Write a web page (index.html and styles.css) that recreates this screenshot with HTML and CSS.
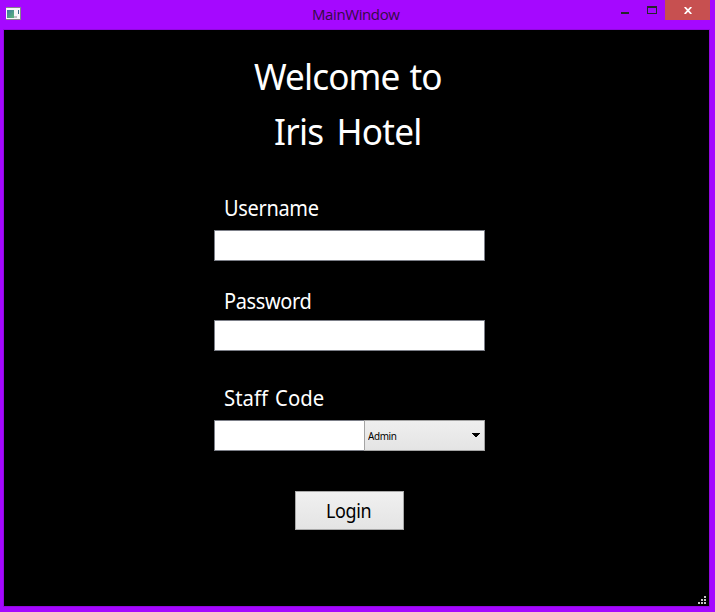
FILE: index.html
```html
<!DOCTYPE html>
<html lang="en">
<head>
<meta charset="utf-8">
<title>MainWindow</title>
<link rel="stylesheet" href="styles.css">
</head>
<body>
<div class="window">
  <header class="titlebar">
    <svg class="app-icon" width="15" height="13" viewBox="0 0 15 13" shape-rendering="crispEdges">
      <defs><linearGradient id="pane" x1="0" y1="0" x2="1" y2="1"><stop offset="0" stop-color="#3c78a0"/><stop offset="1" stop-color="#5cb878"/></linearGradient></defs>
      <rect width="15" height="13" fill="#85858c"/>
      <rect x="0" y="1" width="14" height="11" fill="#f7f7f9"/>
      <rect x="1" y="3" width="7" height="8" fill="url(#pane)"/>
      <rect x="8" y="9" width="3" height="2" fill="#c0c0c8"/>
      <rect x="12" y="3" width="1" height="4" fill="#38708e"/>
    </svg>
    <h1 class="caption">MainWindow</h1>
    <div class="controls">
      <svg class="minmax" width="65" height="20" viewBox="0 0 65 20" shape-rendering="crispEdges">
        <rect x="21" y="12" width="8" height="2" fill="#26262c"/>
        <path d="M47 6h10v8H47zM48 8v5h8V8z" fill="#26262c" fill-rule="evenodd"/>
      </svg>
      <button class="close" aria-label="Close">
        <svg width="8" height="7" viewBox="0 0 8 7"><path d="M.7 0 7.3 7M7.3 0 .7 7" stroke="#fff" stroke-width="1.8"/></svg>
      </button>
    </div>
  </header>
  <main class="client">
    <h2 class="welcome"><span class="line first">Welcome to</span><span class="line second">Iris Hotel</span></h2>
    <form class="login">
      <label class="label user" for="u">Username</label>
      <input class="field" id="u">
      <label class="label pass" for="p">Password</label>
      <input class="field" id="p" type="password">
      <label class="label staff" for="s">Staff Code</label>
      <div class="staff-row">
        <input class="field code" id="s">
        <div class="combo"><span class="role">Admin</span><svg width="8" height="5" viewBox="0 0 8 5" shape-rendering="crispEdges"><path d="M0 0h8v1H7v1H6v1H5v1H3V3H2V2H1V1H0z"/></svg></div>
      </div>
      <button class="submit" type="button"><span class="submit-text">Login</span></button>
    </form>
    <svg class="grip" width="8" height="8" viewBox="0 0 8 8" shape-rendering="crispEdges"><path d="M6 0h2v2H6zM3 3h2v2H3zM6 3h2v2H6zM0 6h2v2H0zM3 6h2v2H3zM6 6h2v2H6z" fill="#c6c6c6"/></svg>
  </main>
</div>
</body>
</html>
```
FILE: styles.css
```css
* { box-sizing: border-box; }
body { margin: 0; font-family: "Noto Sans", sans-serif; }
.window {
  width: 715px; height: 612px;
  display: flex; flex-direction: column;
  padding: 0 5px 5px 3px;
  background: #a508ff;
}
.titlebar { display: flex; flex: 0 0 29px; }
.app-icon { margin: 7px 0 0 3px; }
.caption {
  margin: 0 0 0 291px; width: 92px;
  font: 400 15px/29px "Open Sans", sans-serif;
  color: #340c44; white-space: nowrap; letter-spacing: -0.4px;
}
.controls { display: flex; margin-left: auto; }
.close {
  display: flex; align-items: center; justify-content: center;
  width: 45px; height: 20px; padding: 1px 0 0;
  border: 0; background: #c75050;
}
.client {
  position: relative; flex: 1;
  border: 1px solid #9208e0;
  background: #000; color: #fff;
}
.welcome {
  width: 271px; margin: 18px 0 0 210px;
  font-size: 37px; font-weight: 400; line-height: 55px;
}
.line, .label, .role, .submit-text { transform-origin: left center; white-space: nowrap; }
.line { display: block; transform: scaleX(0.95); }
.first { margin-left: 40px; letter-spacing: -0.95px; word-spacing: 2px; }
.second { margin-left: 60px; letter-spacing: -0.8px; word-spacing: 5px; }
.login {
  display: flex; flex-direction: column;
  width: 271px; margin: 34px 0 0 210px;
}
.label { margin-left: 10px; font-size: 21.5px; line-height: 32px; transform: scaleX(0.93); }
.user { height: 38px; letter-spacing: -0.35px; }
.pass { height: 35px; margin-top: 24px; letter-spacing: -0.4px; }
.staff { height: 38px; margin-top: 31px; letter-spacing: 0; word-spacing: 2px; transform: scaleX(0.945); }
.field {
  width: 271px; height: 31px; padding: 2px 6px;
  border: 1px solid #7c7f88; border-radius: 0;
  background: #fff; outline: 0;
}
.staff-row { display: flex; }
.code { width: 150px; border-right: 0; }
.combo {
  display: flex; align-items: center; justify-content: space-between;
  width: 121px; height: 31px; padding: 0 4px 0 3px;
  border: 1px solid #a4a4a4;
  background: linear-gradient(#efefef, #e4e4e4);
  color: #000; font-size: 11px; letter-spacing: -0.4px;
}
.role { transform: scaleX(0.9); }
.submit {
  width: 109px; height: 39px; margin: 40px 0 0 81px; padding: 1px 0 0 30px;
  border: 1px solid #a8a8a8;
  background: linear-gradient(#f0f0f0, #e4e4e4);
  color: #000; font: 19.5px/36px "Noto Sans", sans-serif; letter-spacing: -0.4px;
  text-align: left;
}
.submit-text { display: block; transform: scaleX(0.92); }
.grip { position: absolute; right: 3px; bottom: 2px; }
```
